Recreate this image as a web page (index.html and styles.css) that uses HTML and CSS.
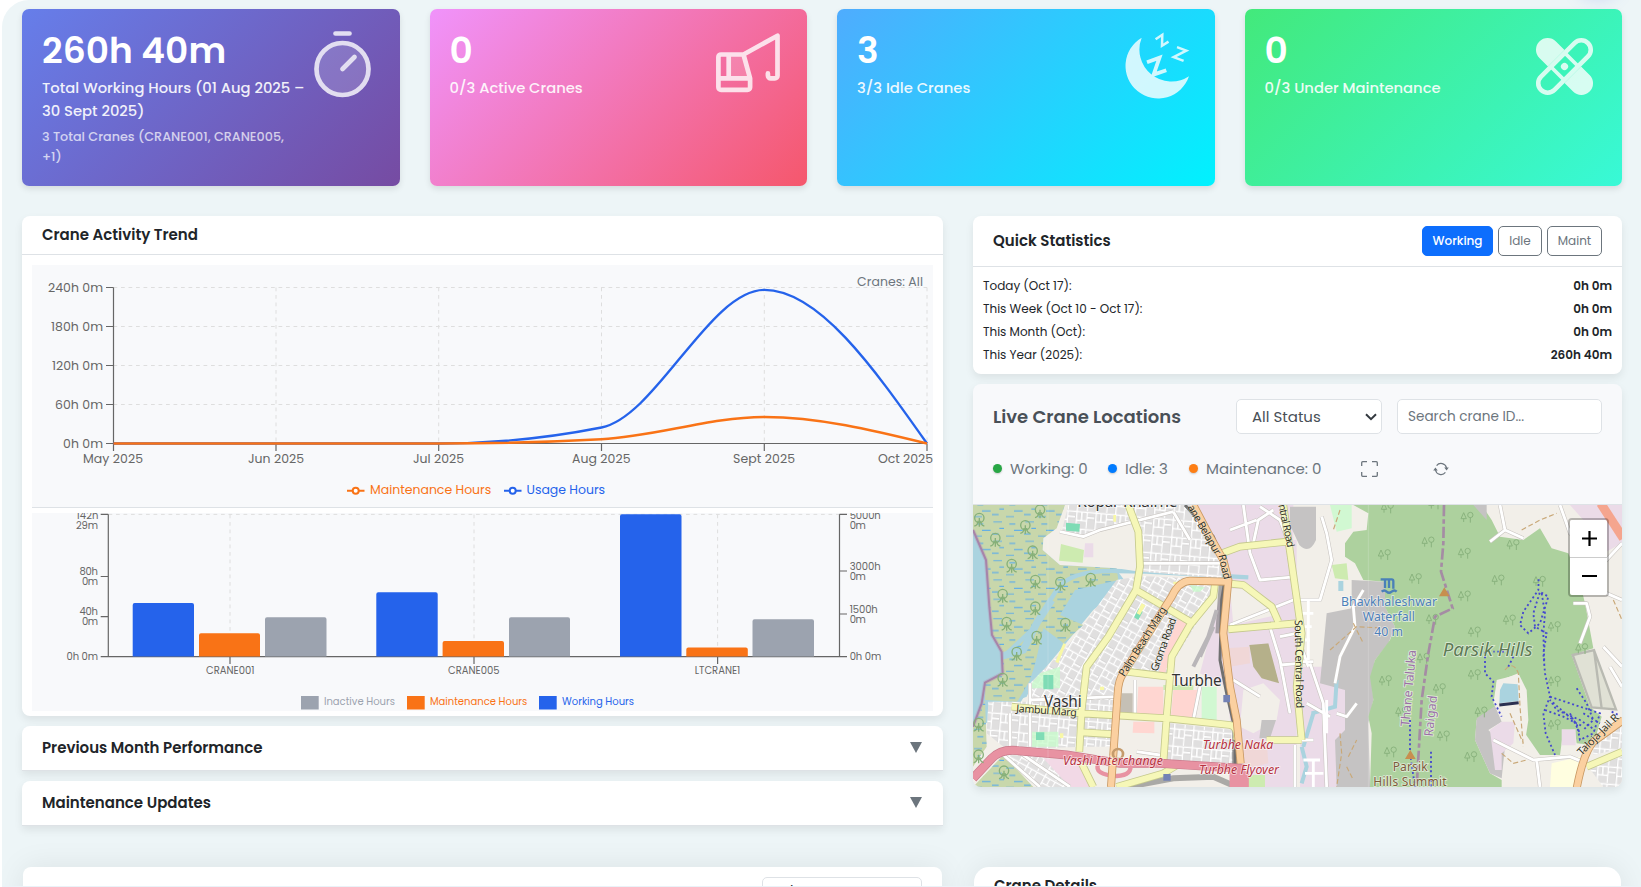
FILE: index.html
```html
<!DOCTYPE html>
<html lang="en">
<head>
<meta charset="utf-8">
<title>Crane Dashboard</title>
<link rel="stylesheet" href="styles.css">
</head>
<body>
<main class="page">
  <span class="glow"></span>
  <section class="kpis">
    <article class="kpi kpi-hours">
      <div class="kpi-text">
        <div class="kpi-value">260h 40m</div>
        <div class="kpi-label">Total Working Hours (01 Aug 2025 –<br>30 Sept 2025)</div>
        <div class="kpi-sub">3 Total Cranes (CRANE001, CRANE005,<br>+1)</div>
      </div>
      <svg class="kpi-icon" viewBox="0 0 75 75" fill="none" stroke="#fff" stroke-width="4.7" stroke-linecap="round"><circle cx="37.5" cy="40" r="26" fill="#fff" fill-opacity=".2"/><path d="M30.5 4.5H44.5M37.5 40L49.5 28"/></svg>
    </article>
    <article class="kpi kpi-active">
      <div class="kpi-text">
        <div class="kpi-value">0</div>
        <div class="kpi-label">0/3 Active Cranes</div>
      </div>
      <svg class="kpi-icon" viewBox="0 0 75 75" fill="none" stroke="#fff" stroke-width="4.7" stroke-linecap="round" stroke-linejoin="round"><path d="M16.7 25.5H31.3L37.3 49.3H16.7Z" fill="#fff" fill-opacity=".2" stroke="none"/><path d="M31.3 25.5H9a2.6 2.6 0 0 0-2.6 2.6V58.2a2.6 2.6 0 0 0 2.6 2.6H35.500a2.600 2.600 0 0 0 2.600-2.600V49.300L31.500 25.500 65.500 6.700V46.700a2.600 2.600 0 0 1-2.600 2.600H58.700a2.800 2.800 0 0 1-2.800-2.800V44.400M6.400 49.300H38.100M16.700 25.500V49.300"/></svg>
    </article>
    <article class="kpi kpi-idle">
      <div class="kpi-text">
        <div class="kpi-value">3</div>
        <div class="kpi-label">3/3 Idle Cranes</div>
      </div>
      <svg class="kpi-icon" viewBox="0 0 75 75" fill="none" stroke="#fff"><path fill="#fff" stroke="none" d="M21.7 8.7A32.6 32.6 0 1 0 69 47.3A32 32 0 0 1 21.7 8.7Z"/><path stroke-width="3.8" d="M27 33.2L39.5 28.6L33.6 45.6L46.3 41.2"/><path stroke-width="2.5" d="M35.6 10.3L42.3 5.8L42 16.7L48.5 12.6M57 18.2L66.3 21.6L53.6 28.1L63.6 31.9"/></svg>
    </article>
    <article class="kpi kpi-maint">
      <div class="kpi-text">
        <div class="kpi-value">0</div>
        <div class="kpi-label">0/3 Under Maintenance</div>
      </div>
      <svg class="kpi-icon" viewBox="0 0 75 75"><g transform="translate(37.5 37.5) rotate(45)"><path fill="#fff" d="M-11.7 -11.7H-23.8a11.7 11.7 0 0 0 0 23.4H-11.7ZM11.7 -11.7H23.8a11.7 11.7 0 0 1 0 23.4H11.7Z"/><rect x="-9.5" y="-33.2" width="19" height="66.4" rx="9.5" fill="none" stroke="#fff" stroke-width="4.6"/><path d="M-9.5 -9.8H9.5M-9.5 9.8H9.5" stroke="#fff" stroke-width="3.6"/><circle r="3.6" fill="#fff"/></g></svg>
    </article>
  </section>

  <section class="columns">
    <div class="col">
      <article class="panel trend">
        <header class="panel-head"><h2 class="t-trend">Crane Activity Trend</h2></header>
        <div class="charts">
          <svg class="chart-line" viewBox="32 265 901 242">
            <g class="grid" stroke-dasharray="3.75 3.75">
              <path d="M113.5 287.5H927M113.5 326.5H927M113.5 365.5H927M113.5 404.5H927"/>
              <path d="M276 287.5V443M438.7 287.5V443M601.5 287.5V443M764.3 287.5V443M927 287.5V443"/>
            </g>
            <path class="axis" d="M113.5 287.5V443.5H927M106 287.5h7.5M106 326.5h7.5M106 365.5h7.5M106 404.5h7.5M106 443.5h7.5M113.5 443.5v7.5M276 443.5v7.5M438.7 443.5v7.5M601.5 443.5v7.5M764.3 443.5v7.5M927 443.5v7.5"/>
            <path class="line blue-line" d="M113.5 443.5H438.7C492.9 443.5 547.3 438.2 601.5 427.5C655.7 416.8 710 289.9 764.3 289.9C818.5 289.9 872.8 366.7 927 443.5"/>
            <path class="line orange-line" d="M113.5 443.5H438.7C492.9 443.5 547.3 442.1 601.5 439.2C655.7 436.5 710 417 764.3 417C818.5 417 872.8 430.2 927 443.5"/>
            <g class="tick t13">
              <text x="48" y="292" textLength="55">240h 0m</text>
              <text x="51" y="331" textLength="52">180h 0m</text>
              <text x="52" y="370" textLength="51">120h 0m</text>
              <text x="55" y="409" textLength="48">60h 0m</text>
              <text x="63" y="448" textLength="40">0h 0m</text>
              <text x="83" y="463" textLength="60">May 2025</text>
              <text x="248" y="463" textLength="56">Jun 2025</text>
              <text x="413" y="463" textLength="51">Jul 2025</text>
              <text x="572" y="463" textLength="58.500">Aug 2025</text>
              <text x="733" y="463" textLength="62">Sept 2025</text>
              <text x="878" y="463" textLength="55">Oct 2025</text>
              <text class="gray" x="857" y="286" textLength="66">Cranes: All</text>
            </g>
            <g class="legend-mark">
              <path stroke="#f97316" d="M347 490.700h6M358.500 490.700h6"/><circle cx="355.700" cy="490.700" r="3" stroke="#f97316"/>
              <path stroke="#2563eb" d="M504 490.700h6M515.500 490.700h6"/><circle cx="512.700" cy="490.700" r="3" stroke="#2563eb"/>
            </g>
            <g class="t13">
              <text fill="#f97316" x="370" y="494">Maintenance Hours</text>
              <text fill="#2563eb" x="526.500" y="494">Usage Hours</text>
            </g>
          </svg>
          <svg class="chart-bars" viewBox="32 513 901 198">
            <g class="grid" stroke-dasharray="3.75 3.75">
              <path d="M108.500 514.400H839.500M230 514.500V656M474 514.500V656M717.600 514.500V656"/>
            </g>
            <path class="axis" d="M108.300 514.300V656.600H839.500V514.300M100.700 514.400h7.500M100.700 576.500h7.500M100.700 616.700h7.500M100.700 656.600h7.500M839.500 514.400h7.500M839.500 571h7.500M839.500 614h7.500M839.500 656.600h7.500M230 656.600v7.500M474 656.600v7.500M717.600 656.600v7.500"/>
            <g fill="#2563eb">
              <path d="M132.700 656.500V605q0-2 2-2H192q2 0 2 2V656.500ZM376.300 656.500V594.300q0-2 2-2H435.700q2 0 2 2V656.500ZM620 656.500V516.300q0-2 2-2H679.500q2 0 2 2V656.500Z"/>
            </g>
            <g fill="#f97316">
              <path d="M199 656.500V635.300q0-2 2-2H258q2 0 2 2V656.500ZM442.600 656.500V643.100q0-2 2-2H502q2 0 2 2V656.500ZM686.300 656.500V649.500q0-2 2-2H745.800q2 0 2 2V656.500Z"/>
            </g>
            <g fill="#9ca3af">
              <path d="M265 656.500V619.200q0-2 2-2H324.500q2 0 2 2V656.500ZM509 656.500V619.200q0-2 2-2H568q2 0 2 2V656.500ZM752.500 656.500V621.200q0-2 2-2H812q2 0 2 2V656.500Z"/>
            </g>
            <g class="tick t10">
              <text x="76.500" y="519.300" textLength="22">142h</text><text x="76" y="529.300" textLength="22">29m</text>
              <text x="79.500" y="575.300" textLength="18.500">80h</text><text x="82" y="585.300" textLength="16">0m</text>
              <text x="79.500" y="615.300" textLength="18.500">40h</text><text x="82" y="625.300" textLength="16">0m</text>
              <text x="66.500" y="660.300" textLength="31.500">0h 0m</text>
              <text x="849.700" y="519.300" textLength="31">5000h</text><text x="849.700" y="529.300" textLength="16">0m</text>
              <text x="849.700" y="570.300" textLength="31">3000h</text><text x="849.700" y="580.300" textLength="16">0m</text>
              <text x="849.700" y="613.300" textLength="28">1500h</text><text x="849.700" y="623.300" textLength="16">0m</text>
              <text x="849.700" y="660.300" textLength="31.500">0h 0m</text>
              <text x="206" y="674.300" textLength="48.500">CRANE001</text>
              <text x="448" y="674.300" textLength="51.500">CRANE005</text>
              <text x="694.700" y="674.300" textLength="45.500">LTCRANE1</text>
            </g>
            <path fill="#9ca3af" d="M301 696h17.700v13.500H301z"/>
            <path fill="#f97316" d="M407 696h17.700v13.500H407z"/>
            <path fill="#2563eb" d="M539 696h17.700v13.500H539z"/>
            <g class="t10">
              <text fill="#9ca3af" x="324" y="705.300">Inactive Hours</text>
              <text fill="#f97316" x="430" y="705.300">Maintenance Hours</text>
              <text fill="#2563eb" x="562" y="705.300">Working Hours</text>
            </g>
          </svg>
        </div>
      </article>
      <article class="panel fold"><h2 class="t-prev">Previous Month Performance</h2><span class="caret"></span></article>
      <article class="panel fold"><h2 class="t-upd">Maintenance Updates</h2><span class="caret"></span></article>
    </div>

    <div class="col">
      <article class="panel stats">
        <header class="panel-head stats-head">
          <h2 class="t-quick">Quick Statistics</h2>
          <div class="tabs"><button class="tab tab-working">Working</button><button class="tab tab-idle">Idle</button><button class="tab tab-maint">Maint</button></div>
        </header>
        <dl class="rows">
          <div class="row"><dt>Today (Oct 17):</dt><dd>0h 0m</dd></div>
          <div class="row"><dt>This Week (Oct 10 - Oct 17):</dt><dd>0h 0m</dd></div>
          <div class="row"><dt>This Month (Oct):</dt><dd>0h 0m</dd></div>
          <div class="row"><dt>This Year (2025):</dt><dd>260h 40m</dd></div>
        </dl>
      </article>

      <article class="panel live">
        <header class="live-head">
          <div class="live-top">
            <h2 class="t-live">Live Crane Locations</h2>
            <div class="select"><span>All Status</span><svg width="12" height="8" viewBox="0 0 12 8"><path d="M1 1.200L6 6.200L11 1.200" fill="none" stroke="#343a40" stroke-width="2"/></svg></div>
            <div class="input">Search crane ID...</div>
          </div>
          <div class="live-legend">
            <span class="key key-w"><i class="dot green"></i>Working: 0</span>
            <span class="key key-i"><i class="dot blue"></i>Idle: 3</span>
            <span class="key key-m"><i class="dot orange"></i>Maintenance: 0</span>
            <svg class="ico-full" width="17" height="16" viewBox="0 0 17 16" fill="none" stroke="#6c757d" stroke-width="1.300"><path d="M.7 5V1.700q0-1 1-1H6M11 .7h4.300q1 0 1 1V5M16.300 11v3.300q0 1-1 1H11M6 15.300H1.700q-1 0-1-1V11"/></svg>
            <svg class="ico-sync" width="16" height="16" viewBox="0 0 16 16" fill="none" stroke="#6c757d" stroke-width="1.200"><path d="M3.600 4.600A5.600 5.600 0 0 1 13.500 7M12.400 11.400A5.600 5.600 0 0 1 2.500 9"/><path fill="#6c757d" stroke="none" d="M.2 9.600H4.800L2.400 6.600ZM11.200 6.400H15.800L13.600 9.400Z"/></svg>
          </div>
        </header>
        <div class="map">
          <svg class="map-art" viewBox="39 15 1947 846" preserveAspectRatio="none">
            <defs>
              <pattern id="marsh" width="96" height="58" patternUnits="userSpaceOnUse"><path d="M4 8h26M52 14h18M22 27h14M66 33h26M0 44h20M42 50h24" stroke="#62aee6" stroke-width="3.500"/></pattern>
              <pattern id="blocks" width="62" height="46" patternUnits="userSpaceOnUse" patternTransform="rotate(29)"><rect width="62" height="46" fill="#e0dfdf"/><path d="M0 4H62M5 0V46M5 25H40M40 4V46M22 4V25M40 34H62" stroke="#cfcdcd" stroke-width="7" fill="none"/><path d="M0 4H62M5 0V46M5 25H40M40 4V46M22 4V25M40 34H62" stroke="#fff" stroke-width="5" fill="none"/></pattern>
              <pattern id="blocksFlat" width="58" height="52" patternUnits="userSpaceOnUse" patternTransform="rotate(5)"><rect width="58" height="52" fill="#e0dfdf"/><path d="M0 4H58M5 0V52M5 30H36M36 4V52M20 4V30M36 20H58" stroke="#cfcdcd" stroke-width="7" fill="none"/><path d="M0 4H58M5 0V52M5 30H36M36 4V52M20 4V30M36 20H58" stroke="#fff" stroke-width="5" fill="none"/></pattern>
              <g id="palm" fill="none" stroke="#86b079" stroke-width="4"><circle cx="0" cy="-6" r="14"/><path d="M-15 18Q-4 16-4 2M15 18Q4 16 4 2M0 20V-6"/></g>
              <g id="trees" fill="none" stroke="#8ab37e" stroke-width="3"><path d="M-10-14L-18 4H-2ZM-10 4V14M10 0V16"/><circle cx="10" cy="-7" r="8"/></g>
            </defs>
            <rect x="39" y="15" width="1947" height="846" fill="#f2efe9"/>
            <path fill="#ebdbe8" d="M700 15H1000V861H830L800 560 720 520 790 250ZM1020 500H1150V861H1020ZM960 560H1010V861H900Z"/>
            <path fill="#aad3df" d="M39 15H330L470 210 500 250 400 330 210 560 180 610 60 680H39Z"/>
            <path fill="#c8d7ab" d="M39 15H315L300 85 250 115 248 150 300 195 470 205 475 240 345 270 300 345 370 375 310 430 250 385 210 560 170 605 75 600V545L130 520 125 450 95 400 80 180 39 90ZM39 670L75 600 80 740 39 800ZM39 861L130 765 220 861Z"/>
            <path fill="url(#marsh)" d="M39 15H315L300 85 250 115 248 150 300 195 470 205 475 240 345 270 300 345 370 375 310 430 250 385 210 560 170 605 75 600V545L130 520 125 450 95 400 80 180 39 90ZM39 670L75 600 80 740 39 800ZM39 861L130 765 220 861Z"/>
            <path fill="none" stroke="#aad3df" stroke-width="13" d="M865 232L560 215 470 213Q330 210 290 270L215 390 130 470"/>
            <path fill="none" stroke="#aad3df" stroke-width="22" d="M275 300L230 370 190 450 120 470"/>
            <path fill="#aad3df" d="M250 385L305 425 235 510 200 590 175 600 210 540 235 460Z"/>
            <path fill="none" stroke="#a07fa3" stroke-width="6" d="M39 90L78 180 88 320 96 405 125 455 128 520 75 548 65 610 39 680"/>
            <path fill="none" stroke="#b58fb5" stroke-width="12" opacity=".35" d="M39 90L78 180 88 320 96 405 125 455 128 520 75 548 65 610 39 680"/>
            <path fill="#f2efe9" d="M315 15H520L530 60 540 215 470 205 300 195 248 150 250 115 290 85Z"/>
            <path fill="url(#blocksFlat)" d="M325 15H690L785 190V235L545 215 530 60 420 90 370 105 305 95Z"/>
            <path fill="#cdebb0" d="M303 132L372 150 368 188 297 182Z"/><path fill="#ebdbe8" d="M375 130h25v42h-28z"/>
            <path fill="url(#blocks)" d="M470 240L540 228 765 238V280L630 500 610 540 500 515 470 560V600H210V550L330 430Z"/>
            <path fill="url(#blocksFlat)" d="M85 605H370V740L240 745 130 740 80 700ZM370 600H470V740H370ZM630 670L820 690V790L620 780Z"/>
            <path fill="url(#blocks)" d="M130 765L250 770 400 861H235Z"/>
            <path fill="#f2d9e6" d="M250 775L360 780 400 861H330Z"/>
            <path fill="#c8facc" d="M215 695h80v45h-80zM215 550L240 520 300 500V565H215ZM690 255L735 262 720 275H700ZM540 570h55v20h-55zM725 560h45v100h-45zM1110 15h65v70l-45 10z" opacity=".8"/>
            <path fill="#7fdcb5" d="M318 68L360 72 358 95 318 92ZM250 525H280V568H250ZM228 697H253V720H228ZM536 325L548 335 535 360 522 352Z"/>
            <path fill="#f8f8a6" d="M460 45h8v20h-8zM545 310L556 316 540 345 530 340ZM310 430L318 432 295 490 286 485ZM300 700h10v14h-10zM420 560h12v10h-12zM455 705h8v10h-8zM640 245h20v8h-20z"/>
            <path fill="#ffd6d1" d="M655 350L690 375 630 470 615 520H595L610 460ZM535 560H610V650L530 645ZM640 570H720L700 655H632ZM520 665H583V700L518 698Z"/>
            <path fill="#c5c0b5" d="M485 580H518V640H480Z"/><path fill="#b5b08a" d="M868 435L930 430 958 550 905 535 880 500Z"/>
            <path fill="#f0d7d7" d="M800 445L868 440 870 490 810 500ZM840 730L920 725 925 790 840 810Z"/>
            <path fill="#f2efe9" d="M810 265L880 270 950 345 820 375ZM850 570L910 550 960 600 950 660 880 700 840 680Z"/>
            <path fill="#c5c3c3" d="M905 660H948L930 715H898ZM990 20h78v100q-20 45-50 15l-28-60z"/>
            <path fill="#cdebb0" d="M865 825H915V861H860ZM610 555h90v15h-90zM1115 195L1160 190 1165 240 1125 235Z"/>
            <path fill="#ebdbe8" d="M1100 565H1158V690L1130 710 1120 861H1030V560ZM980 120H1010V560H960L925 430 960 400ZM1830 15H1986V130L1930 160 1870 60Z"/>
            <path fill="#c5c3c3" d="M1175 240L1275 245 1280 330 1305 380 1285 430 1245 480 1235 530 1240 600 1225 670 1230 861H1130L1125 720 1155 690V570L1080 550 1100 340 1175 325Z"/>
            <path fill="#add19e" d="M1180 15H1565L1595 60 1620 110 1690 120 1740 85 1775 145 1825 160 1860 250 1875 310 1900 445 1835 465 1890 620 1925 650 1900 735 1850 730 1845 690H1810L1800 765H1740L1695 700 1700 640 1680 550 1670 525 1610 540 1605 620 1550 660 1545 720 1590 820 1625 840V861H1230L1235 700 1225 650 1240 600 1230 530 1245 480 1290 420 1305 380 1275 320V245L1210 240 1185 190 1155 170V130L1180 95 1220 90 1225 40Z"/>
            <path fill="#c5c3c3" d="M1605 618L1550 655 1545 720 1590 820 1625 835 1635 740 1585 690 1625 665ZM1540 15H1580V60Z"/>
            <path fill="#f2efe9" d="M1610 545L1675 520 1700 570 1705 660 1690 760 1630 660 1600 610Z"/>
            <path fill="#ebdbe8" d="M1590 690L1625 665H1665L1660 730 1625 760V810H1605ZM1805 688h42v48h-42z"/>
            <path fill="#aad3df" d="M1630 550L1673 553 1676 603 1618 610 1620 570ZM1135 243h15v30h-15z"/><path d="M1618 615L1676 608" stroke="#2a3050" stroke-width="9"/>
            <path fill="#e0e1d5" stroke="#b9bab2" stroke-width="7" d="M1838 465L1902 450 1968 628 1895 622ZM1902 450L1925 625"/>
            <path fill="#fffee0" d="M1775 790L1860 770 1850 861H1770Z"/>
            <path fill="url(#blocksFlat)" d="M1885 800L1986 770V861H1930ZM1900 725L1986 675V745L1900 765Z"/>
            <path fill="none" stroke="#aad3df" stroke-width="12" d="M1025 740L1040 800 1025 850M1055 640L1125 620 1130 540M1060 640L1030 740"/>
            <g fill="none" stroke="#c9c5c1" stroke-width="12" stroke-linejoin="round"><path d="M300 95L370 110 420 90 640 35M640 35L690 120M540 190H790M810 90L890 60M850 15L870 160 900 240 1010 230M940 30L895 60 880 130M900 20L960 60 990 140M810 375L1000 300M925 365L960 480 990 640M820 540L900 590M960 495L1020 490M960 410L1010 400M1020 300H1080L1115 180 1100 100 1085 50M1050 490L1090 610 1100 861M1020 485H1060M1060 720H1000M1125 550L1140 470 1185 380 1180 320 1210 270M1040 610L1110 650M1190 610L1160 650 1130 640M1620 15L1635 90 1590 125M1635 90L1690 115M1600 720L1640 740 1720 780 1830 770 1880 790M1730 780L1740 861M1800 15L1830 100 1900 130M1986 130L1930 190 1880 260M1840 310H1880L1890 350 1860 430M1940 280L1986 300M210 550V740M300 600V640M210 600L470 590M150 640V740M525 540V640M720 560L700 660M130 765L240 861M175 755L330 861M530 755L600 765M1005 735V861M1045 500L1020 430M1930 440L1986 500M1950 500L1986 560"/></g>
            <g fill="none" stroke="#fff" stroke-width="8.500" stroke-linejoin="round"><path d="M300 95L370 110 420 90 640 35M640 35L690 120M540 190H790M810 90L890 60M850 15L870 160 900 240 1010 230M940 30L895 60 880 130M900 20L960 60 990 140M810 375L1000 300M925 365L960 480 990 640M820 540L900 590M960 495L1020 490M960 410L1010 400M1020 300H1080L1115 180 1100 100 1085 50M1050 490L1090 610 1100 861M1020 485H1060M1060 720H1000M1125 550L1140 470 1185 380 1180 320 1210 270M1040 610L1110 650M1190 610L1160 650 1130 640M1620 15L1635 90 1590 125M1635 90L1690 115M1600 720L1640 740 1720 780 1830 770 1880 790M1730 780L1740 861M1800 15L1830 100 1900 130M1986 130L1930 190 1880 260M1840 310H1880L1890 350 1860 430M1940 280L1986 300M210 550V740M300 600V640M210 600L470 590M150 640V740M525 540V640M720 560L700 660M130 765L240 861M175 755L330 861M530 755L600 765M1005 735V861M1045 500L1020 430M1930 440L1986 500M1950 500L1986 560M1020 340H1060M1020 380H1055M1020 420H1050M1045 300V480M1030 780H1080M1035 820H1090M1060 780V861M1100 600V700"/></g>
            <g fill="none" stroke="#707070"><path stroke-width="9" d="M675 15L760 110 800 210 785 300 780 480 800 580 825 690V861"/><path stroke-width="18" opacity=".55" d="M785 255L775 400M825 690V861M500 861L640 835 760 830 830 861"/><path stroke="#b9b6b9" stroke-width="12" d="M770 330L745 410 700 500M760 380L720 470"/></g>
            <g fill="none" stroke="#c5c98d" stroke-width="23" stroke-linejoin="round"><path d="M505 15L535 95 540 200 528 270 445 410 380 500 365 630 358 755M528 270L690 365M765 250L760 290 690 375 635 470 620 650 610 790M500 515L625 530M155 620L360 640 620 655 810 675Q835 680 830 720M365 697L460 703M785 160L840 140 980 125M800 250L850 255 935 320 955 365M805 388L1030 368M970 15L1005 260 1025 400 1010 560 1025 720M920 720H1025M365 790L400 861M470 861L610 820 660 790M1880 800L1986 755"/></g>
            <g fill="none" stroke="#f6f7b8" stroke-width="18" stroke-linejoin="round"><path d="M505 15L535 95 540 200 528 270 445 410 380 500 365 630 358 755M528 270L690 365M765 250L760 290 690 375 635 470 620 650 610 790M500 515L625 530M155 620L360 640 620 655 810 675Q835 680 830 720M365 697L460 703M785 160L840 140 980 125M800 250L850 255 935 320 955 365M805 388L1030 368M970 15L1005 260 1025 400 1010 560 1025 720M920 720H1025M365 790L400 861M470 861L610 820 660 790M1880 800L1986 755"/></g>
            <path fill="none" stroke="#c97a8b" stroke-width="27" d="M39 835L95 775Q125 745 175 752L320 765 480 790 600 790 840 805V861"/><path fill="none" stroke="#e892a2" stroke-width="23" d="M39 835L95 775Q125 745 175 752L320 765 480 790 600 790 840 805V861M820 861V825H855V861"/>
            <path fill="none" stroke="#e892a2" stroke-width="13" d="M415 790Q400 825 470 828Q520 825 510 790"/>
            <g fill="none" stroke="#c99963" stroke-width="24"><path d="M700 15L750 110 790 180 805 240 790 400 810 560 830 660 842 790M800 245L690 242Q655 245 635 290L490 520Q475 540 473 580L453 861M1990 660L1900 725Q1870 760 1850 865"/></g>
            <g fill="none" stroke="#fbd0a0" stroke-width="19"><path d="M700 15L750 110 790 180 805 240 790 400 810 560 830 660 842 790M800 245L690 242Q655 245 635 290L490 520Q475 540 473 580L453 861M1990 660L1900 725Q1870 760 1850 865"/></g>
            <circle cx="474" cy="762" r="15" fill="none" stroke="#c49b6c" stroke-width="8"/>
            <path fill="none" stroke="#f5a58e" stroke-width="27" d="M1922 10L1990 115"/>
            <path fill="#7482b5" d="M790 585h20v22h-20zM610 822h22v20h-22z"/>
            <g><use href="#palm" x="58" y="60"/><use href="#palm" x="106" y="120"/><use href="#palm" x="196" y="82"/><use href="#palm" x="218" y="158"/><use href="#palm" x="155" y="198"/><use href="#palm" x="240" y="35"/><use href="#palm" x="226" y="246"/><use href="#palm" x="301" y="252"/><use href="#palm" x="392" y="240"/><use href="#palm" x="128" y="288"/><use href="#palm" x="226" y="326"/><use href="#palm" x="140" y="372"/><use href="#palm" x="316" y="375"/><use href="#palm" x="230" y="414"/><use href="#palm" x="170" y="462"/><use href="#palm" x="128" y="540"/><use href="#palm" x="56" y="675"/><use href="#palm" x="56" y="770"/><use href="#palm" x="132" y="818"/></g>
            <g><use href="#trees" x="1282" y="24"/><use href="#trees" x="1424" y="12"/><use href="#trees" x="1521" y="52"/><use href="#trees" x="1404" y="126"/><use href="#trees" x="1273" y="164"/><use href="#trees" x="1513" y="160"/><use href="#trees" x="1659" y="134"/><use href="#trees" x="1366" y="236"/><use href="#trees" x="1614" y="240"/><use href="#trees" x="1513" y="288"/><use href="#trees" x="1738" y="244"/><use href="#trees" x="1417" y="358"/><use href="#trees" x="1648" y="360"/><use href="#trees" x="1543" y="396"/><use href="#trees" x="1783" y="380"/><use href="#trees" x="1865" y="446"/><use href="#trees" x="1276" y="542"/><use href="#trees" x="1438" y="566"/><use href="#trees" x="1543" y="524"/><use href="#trees" x="1783" y="544"/><use href="#trees" x="1563" y="636"/><use href="#trees" x="1783" y="674"/><use href="#trees" x="1291" y="756"/><use href="#trees" x="1532" y="770"/><use href="#trees" x="1450" y="708"/><use href="#trees" x="1325" y="636"/><use href="#trees" x="1390" y="475"/></g>
            <path fill="none" stroke="#c9a878" stroke-width="3.500" stroke-dasharray="15 8" d="M1110 450L1190 380 1280 385M1180 370L1210 430M1685 90L1740 60 1790 40M1635 510Q1660 480 1675 520L1680 620 1690 740M1650 640L1690 730M1625 760L1660 790 1700 780M1140 700L1145 760 1130 861M1165 770L1190 720M1160 800L1180 840M1960 300L1986 360M1140 30L1120 90"/>
            <path fill="none" stroke="#a58ca4" stroke-width="8" stroke-dasharray="34 9 13 9" d="M1452 15L1450 130 1443 215 1478 325 1425 350 1405 460 1385 600 1370 861"/>
            <path fill="none" stroke="#4448cf" stroke-width="5.500" stroke-dasharray="6 8" d="M1736 238L1735 270 1690 335 1680 375 1705 400 1740 370 1765 290 1740 275 1720 340 1725 380 1760 400 1750 460 1755 520 1770 590 1750 640 1757 700 1785 765M1745 280L1755 340 1750 400 1753 490M1575 455L1575 520 1600 545 1595 590 1625 650M1770 590L1830 610 1920 640 1900 700 1860 720 1850 670 1770 600 1790 630 1860 660 1905 690M1850 565L1880 610 1900 660 1870 690M1755 630L1810 650 1870 680M1350 660V760M1413 755V861M1350 760L1365 861M1660 455L1600 455M1660 470L1645 500M1870 640L1920 670M1955 635L1975 645M1830 640L1860 700"/>
            <path fill="#c78f4f" d="M1453 262L1469 289H1437ZM1351 750L1367 777H1335Z"/>
            <path fill="none" stroke="#4a80b8" stroke-width="7" d="M1262 238H1295Q1300 238 1300 244V266M1275 240V264M1287 240V264M1265 275Q1273 268 1280 275T1295 275 1310 275"/>
            <path stroke="#ffffff" stroke-width="1.500" opacity=".35" d="M264 15V861M1225 15V861"/>
            <g class="map-text place"><text x="352" y="22" textLength="300" font-size="46">Kopar Khairne</text><text x="635" y="558" textLength="150" font-size="46">Turbhe</text><text x="252" y="621" textLength="113" font-size="46">Vashi</text></g>
            <g class="map-text road" font-size="32"><text transform="translate(168 636) rotate(4)" textLength="182">Jambul Marg</text><text transform="translate(493 532) rotate(-58)" textLength="240">Palm Beach Marg</text><text transform="translate(592 516) rotate(-70)" textLength="168">Groma Road</text><text transform="translate(682 22) rotate(60)" textLength="168">ane Belapur</text><text transform="translate(775 166) rotate(77)" textLength="76">Road</text><text transform="translate(955 15) rotate(78)" textLength="132">ntral Road</text><text transform="translate(1004 360) rotate(89)" textLength="265">South Central Road</text><text transform="translate(1865 768) rotate(-45)" textLength="160">Taloja Jail R</text></g>
            <g class="map-text red" font-size="37"><text x="309" y="795" textLength="300">Vashi Interchange</text><text x="728" y="746" textLength="212">Turbhe Naka</text><text x="717" y="823" textLength="240">Turbhe Flyover</text></g>
            <g class="map-text water" font-size="37"><text x="1143" y="319" textLength="288">Bhavkhaleshwar</text><text x="1208" y="364" textLength="157">Waterfall</text><text x="1243" y="408" textLength="86">40 m</text></g>
            <text class="map-text hills" x="1448" y="467" textLength="270" font-size="56">Parsik Hills</text>
            <g class="map-text brown" font-size="36"><text x="1298" y="812" textLength="105">Parsik</text><text x="1240" y="857" textLength="220">Hills Summit</text></g>
            <g class="map-text purple" font-size="37"><text transform="translate(1348 680) rotate(-85)" textLength="230">Thane Taluka</text><text transform="translate(1418 710) rotate(-84)" textLength="123">Raigad</text></g>
          </svg>
          <div class="zoom">
            <span class="zoom-btn"><svg width="15" height="15" viewBox="0 0 15 15"><path d="M0 7.500H15M7.500 0V15" stroke="#000" stroke-width="2.200"/></svg></span>
            <span class="zoom-btn"><svg width="15" height="15" viewBox="0 0 15 15"><path d="M0 7H15" stroke="#000" stroke-width="2"/></svg></span>
          </div>
        </div>
      </article>
    </div>
  </section>

  <section class="columns lower">
    <article class="panel lower-left"><div class="lower-select">Select</div></article>
    <article class="panel lower-right"><h2>Crane Details</h2></article>
  </section>
</main>
</body>
</html>
```

FILE: styles.css
```css
* { box-sizing: border-box; }
body {
  margin: 0;
  height: 887px;
  overflow: hidden;
  background: #fff;
  font-family: Poppins, Inter, "Open Sans", sans-serif;
  color: #212529;
}
h2, dl, dd { margin: 0; }
.page {
  position: relative;
  height: 887px;
  margin-left: 2px;
  padding: 9px 19px 0 20px;
  overflow: hidden;
  background: #edf5f7;
  border-top-left-radius: 27px;
  border-bottom: 1px solid #eaf2f8;
}
.glow {
  position: absolute;
  top: -28px;
  right: 26px;
  width: 34px;
  height: 20px;
  border-radius: 50%;
  box-shadow: 0 4px 16px 3px rgba(102, 126, 234, .25);
}
.kpis {
  position: relative;
  display: grid;
  grid-template-columns: repeat(4, minmax(0, 1fr));
  gap: 30px;
  height: 177px;
}
.kpi {
  display: flex;
  justify-content: space-between;
  padding: 20px;
  border-radius: 7px;
  color: #fff;
  box-shadow: 0 3px 6px rgba(0, 0, 0, .1);
}
.kpi-hours { background: linear-gradient(135deg, #667eea 0%, #764ba2 100%); }
.kpi-active { background: linear-gradient(135deg, #f093fb 0%, #f5576c 100%); }
.kpi-idle { background: linear-gradient(135deg, #4facfe 0%, #00f2fe 100%); }
.kpi-maint { background: linear-gradient(135deg, #43e97b 0%, #38f9d7 100%); }
.kpi-text { flex: 1; min-width: 0; white-space: nowrap; }
.kpi-value { font-size: 36px; font-weight: 600; line-height: 43px; }
.kpi-label { margin-top: 5px; font-size: 14.750px; font-weight: 500; line-height: 23px; opacity: .9; }
.kpi-sub { margin-top: 4px; font-size: 12.750px; font-weight: 500; line-height: 19.500px; opacity: .7; }
.kpi-icon { flex: none; width: 75px; height: 75px; opacity: .8; }

.columns {
  display: grid;
  grid-template-columns: 921px 649px;
  gap: 30px;
  margin-top: 30px;
}
.col { display: flex; flex-direction: column; gap: 10px; }
.panel {
  background: #fff;
  border-radius: 8px;
  box-shadow: 0 4px 8px rgba(0, 0, 0, .08);
}
.panel h2 { font-size: 15px; font-weight: 600; line-height: 22px; white-space: nowrap; }
.panel-head {
  display: flex;
  align-items: center;
  justify-content: space-between;
  padding: 0 20px;
  border-bottom: 1px solid #dee2e6;
}
.trend { height: 500px; }
.trend .panel-head { height: 39px; padding-bottom: 1px; }
.charts { padding: 10px 10px 5px; }
.charts svg { display: block; background: #f8f9fb; }
.chart-line { width: 901px; height: 243px; border-bottom: 1px solid #dee2e6; }
.chart-bars { width: 901px; height: 198px; margin-top: 5px; }
.grid { fill: none; stroke: #dedede; stroke-width: 1; }
.axis { fill: none; stroke: #666; stroke-width: 1.200; }
.line { fill: none; stroke-width: 2.400; }
.blue-line { stroke: #2563eb; }
.orange-line { stroke: #f97316; }
.legend-mark { fill: #fff; stroke-width: 2; }
.tick { fill: #666; }
.gray { fill: #6c757d; }
.t13 { font-size: 12.480px; }
.t10 { font-size: 10px; }
.fold {
  display: flex;
  align-items: center;
  justify-content: space-between;
  height: 45px;
  padding: 0 21px 1px 20px;
  border-bottom: 1px solid #dee2e6;
  border-radius: 8px 8px 0 0;
}
.caret {
  border: 6.500px solid transparent;
  border-top: 11px solid #6c757d;
  border-bottom: 0;
}

.stats { height: 158px; }
.stats-head { height: 51px; }
.tabs { display: flex; gap: 5px; }
.tab {
  height: 30px;
  padding: 0;
  border: 1px solid #6c757d;
  border-radius: 5px;
  background: #fff;
  color: #6c757d;
  font-family: inherit;
  font-size: 12px;
}
.tab-working { width: 71px; border-color: #0d6efd; background: #0d6efd; color: #fff; font-weight: 500; }
.tab-idle { width: 44px; }
.tab-maint { width: 55px; }
.rows { padding: 7px 10px; }
.row { display: flex; justify-content: space-between; height: 23px; font-size: 12px; line-height: 23px; }
.row dd { font-weight: 600; }

.live { height: 403px; overflow: hidden; background: #f8f9fb; }
.live-head { height: 121px; padding: 15px 20px 0; border-bottom: 1px solid #dee2e6; }
.live-top { display: flex; align-items: center; height: 35px; }
.live-top h2 { width: 243px; font-size: 18px; color: #495057; }
.select, .input {
  display: flex;
  align-items: center;
  height: 35px;
  border: 1px solid #dee2e6;
  border-radius: 5px;
  background: #fff;
  white-space: nowrap;
}
.select { justify-content: space-between; width: 146px; padding: 0 4px 0 15px; font-size: 15px; color: #495057; }
.input { width: 205px; margin-left: 15px; padding: 0 10px; font-size: 13.600px; color: #6c757d; }
.live-legend { display: flex; align-items: center; height: 24px; margin-top: 22px; font-size: 15px; color: #6c757d; }
.key { display: flex; align-items: center; white-space: nowrap; }
.key-w { width: 115px; }
.key-i { width: 81px; }
.key-m { width: 172px; }
.dot { width: 9px; height: 9px; margin-right: 8px; border-radius: 50%; box-shadow: 0 1px 2px rgba(0, 0, 0, .2); }
.green { background: #28a745; }
.blue { background: #007bff; }
.orange { background: #fd7e14; }
.ico-full, .ico-sync { margin-top: 2px; }
.ico-sync { margin-left: 55px; }
.map { position: relative; height: 282px; }
.map-art { display: block; width: 649px; height: 282px; }
.map-text {
  font-family: "Noto Sans", sans-serif;
  paint-order: stroke;
  stroke: rgba(255, 255, 255, .6);
  stroke-width: 5px;
}
.place { fill: #333; }
.road { fill: #33331f; stroke-width: 2px; }
.red { fill: #b6313f; font-style: italic; }
.water { fill: #4d80b8; }
.hills { fill: #5d7a56; font-style: italic; }
.brown { fill: #7d5b3b; }
.purple { fill: #9a71a5; }
.zoom {
  position: absolute;
  top: 13px;
  right: 13px;
  width: 41px;
  overflow: hidden;
  border: 2px solid rgba(0, 0, 0, .25);
  border-radius: 4px;
  background-clip: padding-box;
}
.zoom-btn {
  display: flex;
  align-items: center;
  justify-content: center;
  height: 37px;
  padding-left: 1px;
  background: #fff;
}
.zoom-btn + .zoom-btn { height: 38px; border-top: 1px solid #ccc; }

.lower { grid-template-columns: 919px 647px; gap: 32px; margin: 41px 0 0 1px; }
.lower .panel { height: 60px; box-shadow: 0 0 30px rgba(0, 0, 0, .08); }
.lower-left { padding: 10px 20px; }
.lower-select {
  width: 160px;
  height: 38px;
  margin-left: auto;
  padding: 3px 10px;
  border: 1px solid #dee2e6;
  border-radius: 5px;
  font-size: 14px;
  line-height: 21px;
}
.lower .lower-right { padding: 8px 20px; border-radius: 15px 15px 0 0; }
.lower-right h2 { font-size: 15px; }
```
